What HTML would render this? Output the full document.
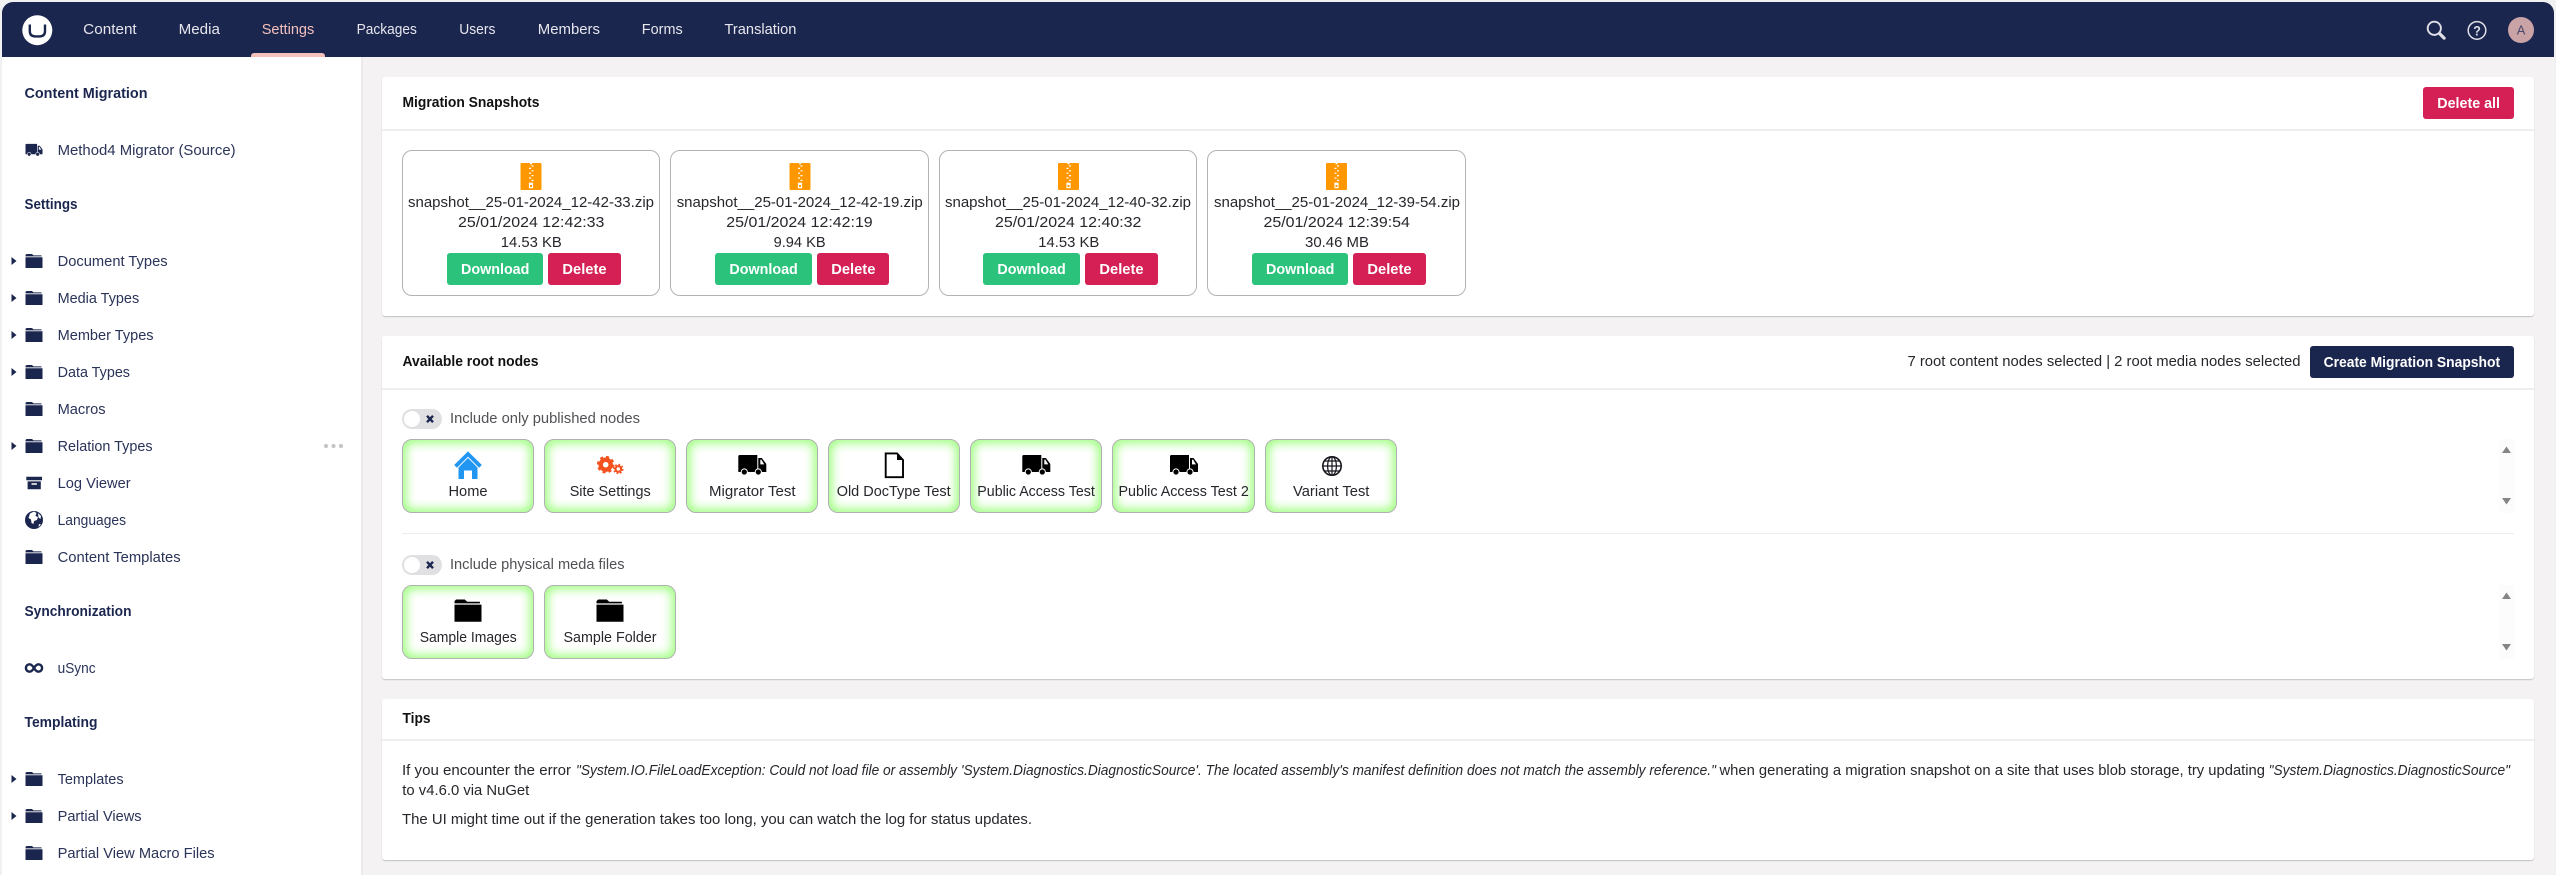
<!DOCTYPE html>
<html lang="en">
<head>
<meta charset="utf-8">
<title>Content Migration</title>
<style>
html,body{margin:0;padding:0;width:2556px;height:875px;overflow:hidden;background:#f2f1f2;font-family:"Liberation Sans",sans-serif}
.a{position:absolute;box-sizing:border-box}
#frame{left:2px;top:2px;width:2552px;height:873px;background:#f4f2f3;border-radius:11px 11px 0 0;overflow:hidden}
#head{left:2px;top:2px;width:2552px;height:55px;background:#1b264f;border-radius:11px 11px 0 0}
#activebar{left:251px;top:53px;width:74px;height:4px;background:#f5c1bc;border-radius:3px 3px 0 0}
#side{left:2px;top:57px;width:361px;height:818px;background:#fff;border-right:2px solid #ebe9ea}
.panel{left:382px;width:2152px;background:#fff;border-radius:3px;box-shadow:0 1px 1px rgba(0,0,0,.2)}
.rule{left:382px;width:2152px;height:2px;background:#efeeef}
.card{top:150px;height:146px;background:#fff;border:1px solid #b3b3b3;border-radius:10px}
.btn{border-radius:3px}
.g{top:253px;height:32px;background:#2bc37c}
.r{top:253px;height:32px;background:#d42054}
.node{width:132px;height:74px;background:#fff;border:1px solid #b0b0b0;border-radius:10px;box-shadow:inset 0 0 10px 3px #9cff7c}
.tg{left:402px;width:40px;height:20px;background:#e0e0e3;border-radius:10px}
.tg i{position:absolute;left:2px;top:2px;width:16px;height:16px;border-radius:50%;background:#fff}
.track{left:2499px;width:15px;height:74px;background:#fcfcfc}
svg{position:absolute;left:0;top:0}
text{font-family:"Liberation Sans",sans-serif;font-size:15px}
.nav{fill:#e6e6ec}
.sl{fill:#2a3358}
.sh{fill:#1b264f;font-weight:700;font-size:14.5px}
.t{fill:#111;font-weight:700;font-size:14.5px}
.c{fill:#26262c}
.b{fill:#fff;font-weight:700}
.m{fill:#515054}
.i{font-style:italic}
</style>
</head>
<body>
<div class="a" id="frame"></div>
<div class="a" id="head"></div>
<div class="a" id="activebar"></div>
<div class="a" id="side"></div>

<div class="a panel" style="top:77px;height:239px"></div>
<div class="a rule" style="top:129px"></div>
<div class="a card" style="left:402px;width:258px"></div>
<div class="a card" style="left:670px;width:258.5px"></div>
<div class="a card" style="left:939px;width:258px"></div>
<div class="a card" style="left:1207px;width:258.5px"></div>
<div class="a btn g" style="left:447px;width:96px"></div>
<div class="a btn r" style="left:548px;width:73px"></div>
<div class="a btn g" style="left:715px;width:97px"></div>
<div class="a btn r" style="left:817px;width:72px"></div>
<div class="a btn g" style="left:983px;width:97px"></div>
<div class="a btn r" style="left:1085px;width:73px"></div>
<div class="a btn g" style="left:1252px;width:96px"></div>
<div class="a btn r" style="left:1353px;width:73px"></div>
<div class="a btn" style="left:2423px;top:87px;width:91px;height:32px;background:#d42054"></div>

<div class="a panel" style="top:336px;height:343px"></div>
<div class="a rule" style="top:388px"></div>
<div class="a btn" style="left:2310px;top:346px;width:204px;height:32px;background:#1b264f"></div>
<div class="a tg" style="top:409px"><i></i></div>
<div class="a tg" style="top:555px"><i></i></div>
<div class="a node" style="left:402px;top:439px"></div>
<div class="a node" style="left:544px;top:439px"></div>
<div class="a node" style="left:686px;top:439px"></div>
<div class="a node" style="left:828px;top:439px"></div>
<div class="a node" style="left:970px;top:439px"></div>
<div class="a node" style="left:1112px;top:439px;width:143px"></div>
<div class="a node" style="left:1265px;top:439px"></div>
<div class="a node" style="left:402px;top:585px"></div>
<div class="a node" style="left:544px;top:585px"></div>
<div class="a track" style="top:439px"></div>
<div class="a track" style="top:585px"></div>
<div class="a" style="left:402px;top:533px;width:2112px;height:1px;background:#efeeef"></div>

<div class="a panel" style="top:699px;height:161px"></div>
<div class="a rule" style="top:739px"></div>

<svg width="2556" height="875" viewBox="0 0 2556 875" xmlns="http://www.w3.org/2000/svg">
<defs>
<symbol id="folder" viewBox="0 0 17 14" overflow="visible"><path d="M1 0h5.5l1.5 1.4h8V2.4H0V1z"/><path d="M0 3.2h17V14H0z"/></symbol>
<symbol id="truck" viewBox="0 0 28 20" overflow="visible"><path d="M1.5 0H19v17H0V1.5A1.5 1.5 0 0 1 1.5 0z"/><path d="M20 3h3.5L28 9v8h-8z"/><path d="M22 4.6h1l3 4.8h-4z" fill="#fff"/><circle cx="6" cy="17" r="3.6" fill="#fff"/><circle cx="6" cy="17" r="2.6"/><circle cx="20" cy="17" r="3.6" fill="#fff"/><circle cx="20" cy="17" r="2.6"/></symbol>
<symbol id="zip" viewBox="0 0 21 27"><path d="M1 0h19a1 1 0 0 1 1 1v25a1 1 0 0 1-1 1H1a1 1 0 0 1-1-1V1a1 1 0 0 1 1-1z" fill="#ff9800"/><path d="M9.5 0h2v1.2h-2zM11 2.4h2v1.2h-2zM8.5 4.8h2V6h-2zM11 7.2h2v1.2h-2zM8.5 9.6h2v1.2h-2zM11 12h2v1.2h-2zM8.5 14.4h2v1.2h-2zM11 16.8h2V18h-2z" fill="#fff"/><path d="M8.4 19.6h4.2v5.6H8.4zM9.5 22v2h2v-2z" fill="#fff" fill-rule="evenodd"/></symbol>
</defs>

<!-- header -->
<circle cx="37.3" cy="30.2" r="15" fill="#fff"/>
<path d="M29.8 24.5v6.5Q29.8 36.4 35.2 36.4h4.4Q45 36.4 45 31v-6.5" fill="none" stroke="#1b264f" stroke-width="2.4"/>
<text class="nav" x="83.2" y="34" textLength="53.5" lengthAdjust="spacingAndGlyphs">Content</text>
<text class="nav" x="178.6" y="34" textLength="41.3" lengthAdjust="spacingAndGlyphs">Media</text>
<text x="261.7" y="34" textLength="52.6" lengthAdjust="spacingAndGlyphs" fill="#f5c1bc">Settings</text>
<text class="nav" x="356.6" y="34" textLength="60.2" lengthAdjust="spacingAndGlyphs">Packages</text>
<text class="nav" x="459.2" y="34" textLength="36.2" lengthAdjust="spacingAndGlyphs">Users</text>
<text class="nav" x="537.8" y="34" textLength="62.2" lengthAdjust="spacingAndGlyphs">Members</text>
<text class="nav" x="641.8" y="34" textLength="40.9" lengthAdjust="spacingAndGlyphs">Forms</text>
<text class="nav" x="724.5" y="34" textLength="71.9" lengthAdjust="spacingAndGlyphs">Translation</text>
<circle cx="2434.3" cy="28.3" r="6.6" fill="none" stroke="#dfe0e6" stroke-width="1.9"/>
<path d="M2439.5 33.5l4.6 4.6" stroke="#dfe0e6" stroke-width="3.2" stroke-linecap="round"/>
<circle cx="2477" cy="30.4" r="8.8" fill="none" stroke="#dfe0e6" stroke-width="1.5"/>
<text x="2473.2" y="35.3" textLength="7.6" lengthAdjust="spacingAndGlyphs" fill="#dfe0e6" style="font-size:13.5px;font-weight:700">?</text>
<circle cx="2521" cy="30" r="13" fill="#c9a3a6"/>
<text x="2516.8" y="34.6" textLength="8.6" lengthAdjust="spacingAndGlyphs" fill="#4b4a6d" style="font-size:12.5px">A</text>

<!-- sidebar -->
<text class="sh" x="24.5" y="98" textLength="123" lengthAdjust="spacingAndGlyphs">Content Migration</text>
<use href="#truck" x="25.5" y="143.5" width="17" height="13" fill="#1b264f"/>
<text class="sl" x="57.6" y="155" textLength="178" lengthAdjust="spacingAndGlyphs">Method4 Migrator (Source)</text>
<text class="sh" x="24.5" y="209" textLength="53" lengthAdjust="spacingAndGlyphs">Settings</text>

<g fill="#1b264f">
<path d="M11.5 257v8l5-4zM11.5 294v8l5-4zM11.5 331v8l5-4zM11.5 368v8l5-4zM11.5 442v8l5-4zM11.5 775v8l5-4zM11.5 812v8l5-4z"/>
<use href="#folder" x="25.5" y="254" width="17" height="14"/>
<use href="#folder" x="25.5" y="291" width="17" height="14"/>
<use href="#folder" x="25.5" y="328" width="17" height="14"/>
<use href="#folder" x="25.5" y="365" width="17" height="14"/>
<use href="#folder" x="25.5" y="402" width="17" height="14"/>
<use href="#folder" x="25.5" y="439" width="17" height="14"/>
<use href="#folder" x="25.5" y="550" width="17" height="14"/>
<use href="#folder" x="25.5" y="772" width="17" height="14"/>
<use href="#folder" x="25.5" y="809" width="17" height="14"/>
<use href="#folder" x="25.5" y="846" width="17" height="14"/>
<path d="M26.3 476.7H42v3.6H26.3zM27.6 481.4h13.2v7.9H27.6zM31.5 483.2v1.6h5.4v-1.6z" fill-rule="evenodd"/>
<circle cx="34" cy="520" r="9"/>
</g>
<path d="M30 513.5l4-2 2.5 1.5-1 3 2.5 1-1 3-3 1-.5 3-2-1-.5-3.5-2.5-1.5zM38 513l3 3-.5 3-2-1.5zM39 524l2 .5-2.5 2.5z" fill="#fff"/>
<path d="M34 668c-1.5-2.5-2.8-3.7-4.4-3.7a3.7 3.7 0 0 0 0 7.4c1.6 0 2.9-1.2 4.4-3.7s2.8-3.7 4.4-3.7a3.7 3.7 0 0 1 0 7.4c-1.6 0-2.9-1.2-4.4-3.7z" fill="none" stroke="#1b264f" stroke-width="2.4"/>
<circle cx="326" cy="446" r="2" fill="#c4c4c8"/><circle cx="333.5" cy="446" r="2" fill="#c4c4c8"/><circle cx="341" cy="446" r="2" fill="#c4c4c8"/>

<text class="sl" x="57.6" y="266" textLength="110" lengthAdjust="spacingAndGlyphs">Document Types</text>
<text class="sl" x="57.6" y="303" textLength="81.6" lengthAdjust="spacingAndGlyphs">Media Types</text>
<text class="sl" x="57.6" y="340" textLength="96" lengthAdjust="spacingAndGlyphs">Member Types</text>
<text class="sl" x="57.6" y="377" textLength="72.4" lengthAdjust="spacingAndGlyphs">Data Types</text>
<text class="sl" x="57.6" y="414" textLength="48" lengthAdjust="spacingAndGlyphs">Macros</text>
<text class="sl" x="57.6" y="451" textLength="95" lengthAdjust="spacingAndGlyphs">Relation Types</text>
<text class="sl" x="57.6" y="488" textLength="73" lengthAdjust="spacingAndGlyphs">Log Viewer</text>
<text class="sl" x="57.6" y="525" textLength="68.4" lengthAdjust="spacingAndGlyphs">Languages</text>
<text class="sl" x="57.6" y="562" textLength="123" lengthAdjust="spacingAndGlyphs">Content Templates</text>
<text class="sh" x="24.5" y="616" textLength="107" lengthAdjust="spacingAndGlyphs">Synchronization</text>
<text class="sl" x="57.6" y="673" textLength="38" lengthAdjust="spacingAndGlyphs">uSync</text>
<text class="sh" x="24.5" y="727" textLength="73" lengthAdjust="spacingAndGlyphs">Templating</text>
<text class="sl" x="57.6" y="784" textLength="66" lengthAdjust="spacingAndGlyphs">Templates</text>
<text class="sl" x="57.6" y="821" textLength="84" lengthAdjust="spacingAndGlyphs">Partial Views</text>
<text class="sl" x="57.6" y="858" textLength="157" lengthAdjust="spacingAndGlyphs">Partial View Macro Files</text>

<!-- snapshots -->
<text class="t" x="402.5" y="107" textLength="137" lengthAdjust="spacingAndGlyphs">Migration Snapshots</text>
<text class="b" x="2437.3" y="108" textLength="62.7" lengthAdjust="spacingAndGlyphs">Delete all</text>

<use href="#zip" x="520.5" y="163" width="21" height="27"/>
<text class="c" x="408" y="207" textLength="246" lengthAdjust="spacingAndGlyphs">snapshot__25-01-2024_12-42-33.zip</text>
<text class="c" x="458" y="227" textLength="146.4" lengthAdjust="spacingAndGlyphs">25/01/2024 12:42:33</text>
<text class="c" x="500.8" y="247" textLength="61" lengthAdjust="spacingAndGlyphs">14.53 KB</text>
<text class="b" x="461" y="274" textLength="68.4" lengthAdjust="spacingAndGlyphs">Download</text>
<text class="b" x="562.4" y="274" textLength="44.2" lengthAdjust="spacingAndGlyphs">Delete</text>

<use href="#zip" x="789.5" y="163" width="21" height="27"/>
<text class="c" x="676.7" y="207" textLength="246" lengthAdjust="spacingAndGlyphs">snapshot__25-01-2024_12-42-19.zip</text>
<text class="c" x="726.3" y="227" textLength="146.4" lengthAdjust="spacingAndGlyphs">25/01/2024 12:42:19</text>
<text class="c" x="773.6" y="247" textLength="52" lengthAdjust="spacingAndGlyphs">9.94 KB</text>
<text class="b" x="729.4" y="274" textLength="68.4" lengthAdjust="spacingAndGlyphs">Download</text>
<text class="b" x="831.2" y="274" textLength="44.2" lengthAdjust="spacingAndGlyphs">Delete</text>

<use href="#zip" x="1058" y="163" width="21" height="27"/>
<text class="c" x="945" y="207" textLength="246" lengthAdjust="spacingAndGlyphs">snapshot__25-01-2024_12-40-32.zip</text>
<text class="c" x="995" y="227" textLength="146.4" lengthAdjust="spacingAndGlyphs">25/01/2024 12:40:32</text>
<text class="c" x="1038.3" y="247" textLength="61" lengthAdjust="spacingAndGlyphs">14.53 KB</text>
<text class="b" x="997.4" y="274" textLength="68.4" lengthAdjust="spacingAndGlyphs">Download</text>
<text class="b" x="1099.4" y="274" textLength="44.2" lengthAdjust="spacingAndGlyphs">Delete</text>

<use href="#zip" x="1326" y="163" width="21" height="27"/>
<text class="c" x="1214" y="207" textLength="246" lengthAdjust="spacingAndGlyphs">snapshot__25-01-2024_12-39-54.zip</text>
<text class="c" x="1263.5" y="227" textLength="146.4" lengthAdjust="spacingAndGlyphs">25/01/2024 12:39:54</text>
<text class="c" x="1305" y="247" textLength="64" lengthAdjust="spacingAndGlyphs">30.46 MB</text>
<text class="b" x="1266" y="274" textLength="68.4" lengthAdjust="spacingAndGlyphs">Download</text>
<text class="b" x="1367.4" y="274" textLength="44.2" lengthAdjust="spacingAndGlyphs">Delete</text>

<!-- root nodes -->
<text class="t" x="402.5" y="366" textLength="136" lengthAdjust="spacingAndGlyphs">Available root nodes</text>
<text class="c" x="1907.5" y="366" textLength="393" lengthAdjust="spacingAndGlyphs">7 root content nodes selected | 2 root media nodes selected</text>
<text class="b" x="2323.6" y="367" textLength="176.5" lengthAdjust="spacingAndGlyphs">Create Migration Snapshot</text>

<path d="M427 415.8l6 6.4M433 415.8l-6 6.4M427 561.8l6 6.4M433 561.8l-6 6.4" stroke="#1b264f" stroke-width="2.4" fill="none"/>
<text class="m" x="450" y="423" textLength="190" lengthAdjust="spacingAndGlyphs">Include only published nodes</text>
<text class="m" x="450" y="569" textLength="174.5" lengthAdjust="spacingAndGlyphs">Include physical meda files</text>

<path d="M2502 453l4.5-6.5 4.5 6.5zM2502 498l4.5 6.5 4.5-6.5zM2502 599l4.5-6.5 4.5 6.5zM2502 644l4.5 6.5 4.5-6.5z" fill="#858585"/>

<!-- home -->
<path d="M455.5 466.4L468 454l12.5 12.4" fill="none" stroke="#2196f3" stroke-width="3.8"/>
<path d="M458.5 467.5L468 458l9.5 9.5V479h-5.5v-8.5h-8V479h-5.5z" fill="#2196f3"/>
<!-- gears -->
<g fill="none" stroke="#f4511e">
<circle cx="605.7" cy="464.7" r="5" stroke-width="4.4"/>
<circle cx="605.7" cy="464.7" r="7.5" stroke-width="2.6" stroke-dasharray="3 2.9"/>
<circle cx="618.3" cy="469" r="2.8" stroke-width="2.2"/>
<circle cx="618.3" cy="469" r="4.4" stroke-width="1.6" stroke-dasharray="1.7 1.75"/>
</g>
<use href="#truck" x="738.3" y="455" width="28" height="20"/>
<path d="M885.7 453.4H897l6 6.6v17.2h-17.3z" fill="#fff" stroke="#000" stroke-width="1.9"/>
<path d="M897 453.4v6.6h6z" fill="#000"/>
<use href="#truck" x="1022.3" y="455" width="28" height="20"/>
<use href="#truck" x="1170" y="455" width="28" height="20"/>
<g fill="none" stroke="#16161e" stroke-width="1.2">
<circle cx="1332" cy="466" r="9.2" stroke-width="1.6"/>
<ellipse cx="1332" cy="466" rx="4.4" ry="9.2"/>
<path d="M1332 456.8v18.4M1322.8 466h18.4M1324.2 461h15.6M1324.2 471h15.6"/>
</g>
<use href="#folder" x="454.5" y="599" width="27" height="23.3" fill="#000"/>
<use href="#folder" x="596.5" y="599" width="27" height="23.3" fill="#000"/>

<text class="c" x="448.5" y="496" textLength="39" lengthAdjust="spacingAndGlyphs">Home</text>
<text class="c" x="569.7" y="496" textLength="81" lengthAdjust="spacingAndGlyphs">Site Settings</text>
<text class="c" x="709" y="496" textLength="86.6" lengthAdjust="spacingAndGlyphs">Migrator Test</text>
<text class="c" x="836.7" y="496" textLength="114" lengthAdjust="spacingAndGlyphs">Old DocType Test</text>
<text class="c" x="977.3" y="496" textLength="117.5" lengthAdjust="spacingAndGlyphs">Public Access Test</text>
<text class="c" x="1118.5" y="496" textLength="130.3" lengthAdjust="spacingAndGlyphs">Public Access Test 2</text>
<text class="c" x="1293" y="496" textLength="76.4" lengthAdjust="spacingAndGlyphs">Variant Test</text>
<text class="c" x="419.7" y="642" textLength="97" lengthAdjust="spacingAndGlyphs">Sample Images</text>
<text class="c" x="563.5" y="642" textLength="93" lengthAdjust="spacingAndGlyphs">Sample Folder</text>

<!-- tips -->
<text class="t" x="402.5" y="723" textLength="28" lengthAdjust="spacingAndGlyphs">Tips</text>
<text class="c" x="402" y="775" textLength="169" lengthAdjust="spacingAndGlyphs">If you encounter the error</text>
<text class="c i" x="576" y="775" textLength="1140" lengthAdjust="spacingAndGlyphs">"System.IO.FileLoadException: Could not load file or assembly 'System.Diagnostics.DiagnosticSource'. The located assembly's manifest definition does not match the assembly reference."</text>
<text class="c" x="1719.5" y="775" textLength="545.5" lengthAdjust="spacingAndGlyphs">when generating a migration snapshot on a site that uses blob storage, try updating</text>
<text class="c i" x="2268.6" y="775" textLength="241.4" lengthAdjust="spacingAndGlyphs">"System.Diagnostics.DiagnosticSource"</text>
<text class="c" x="402.3" y="795" textLength="127" lengthAdjust="spacingAndGlyphs">to v4.6.0 via NuGet</text>
<text class="c" x="402" y="824" textLength="630" lengthAdjust="spacingAndGlyphs">The UI might time out if the generation takes too long, you can watch the log for status updates.</text>
</svg>
</body>
</html>
